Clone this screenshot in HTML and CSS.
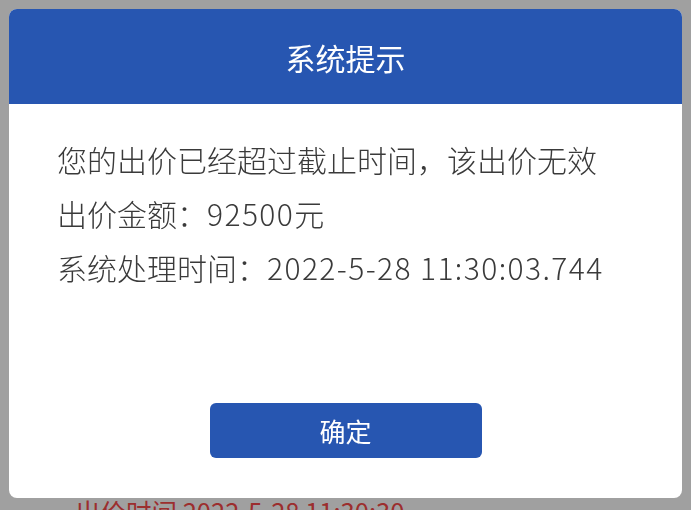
FILE: index.html
```html
<!DOCTYPE html>
<html lang="zh-CN">
<head>
    <meta charset="UTF-8">
    <meta name="viewport" content="width=device-width, initial-scale=1.0">
    <title>系统提示</title>
    <link rel="stylesheet" href="styles.css">
</head>
<body>
    <div class="page">
        <div class="bid-time">出价时间 2022-5-28 11:30:30</div>
    </div>

    <div class="mask">
        <div class="dialog">
            <div class="dialog-header">系统提示</div>
            <div class="dialog-body">
                <p>您的出价已经超过截止时间，该出价无效</p>
                <p>出价金额：<span class="num">92500</span>元</p>
                <p>系统处理时间：<span class="num">2022-5-28 11:30:03.744</span></p>
            </div>
            <div class="dialog-footer">
                <button class="btn-confirm">确定</button>
            </div>
        </div>
    </div>
</body>
</html>
```

FILE: styles.css
```css
body {
    margin: 0;
    padding: 0;
    width: 691px;
    height: 510px;
    overflow: hidden;
    font-family: "Noto Sans CJK SC", "Noto Sans", sans-serif;
    background: #f6f6f6;
}

.page {
    padding: 493px 0 0 75px;
}

.bid-time {
    font-size: 25.5px;
    line-height: 36px;
    color: #f04848;
}

.mask {
    position: fixed;
    top: 0;
    left: 0;
    right: 0;
    bottom: 0;
    background: rgba(0, 0, 0, 0.35);
    padding: 9px;
}

.dialog {
    width: 673px;
    height: 489px;
    background: #ffffff;
    border-radius: 8px;
    overflow: hidden;
    display: flex;
    flex-direction: column;
}

.dialog-header {
    height: 95px;
    background: #2756b1;
    color: #ffffff;
    font-size: 30px;
    display: flex;
    align-items: center;
    justify-content: center;
}

.dialog-body {
    flex: 1;
    padding: 28px 48px 0 48px;
    color: #3a3a3a;
}

.dialog-body p {
    margin: 0;
    font-size: 30px;
    line-height: 54px;
    font-weight: 300;
}

.num {
    letter-spacing: 1.4px;
}

.dialog-footer {
    display: flex;
    justify-content: center;
    padding-bottom: 40px;
}

.btn-confirm {
    width: 272px;
    height: 55px;
    border: none;
    border-radius: 6px;
    background: #2756b1;
    color: #ffffff;
    font-family: inherit;
    font-size: 26px;
    cursor: pointer;
}
```
